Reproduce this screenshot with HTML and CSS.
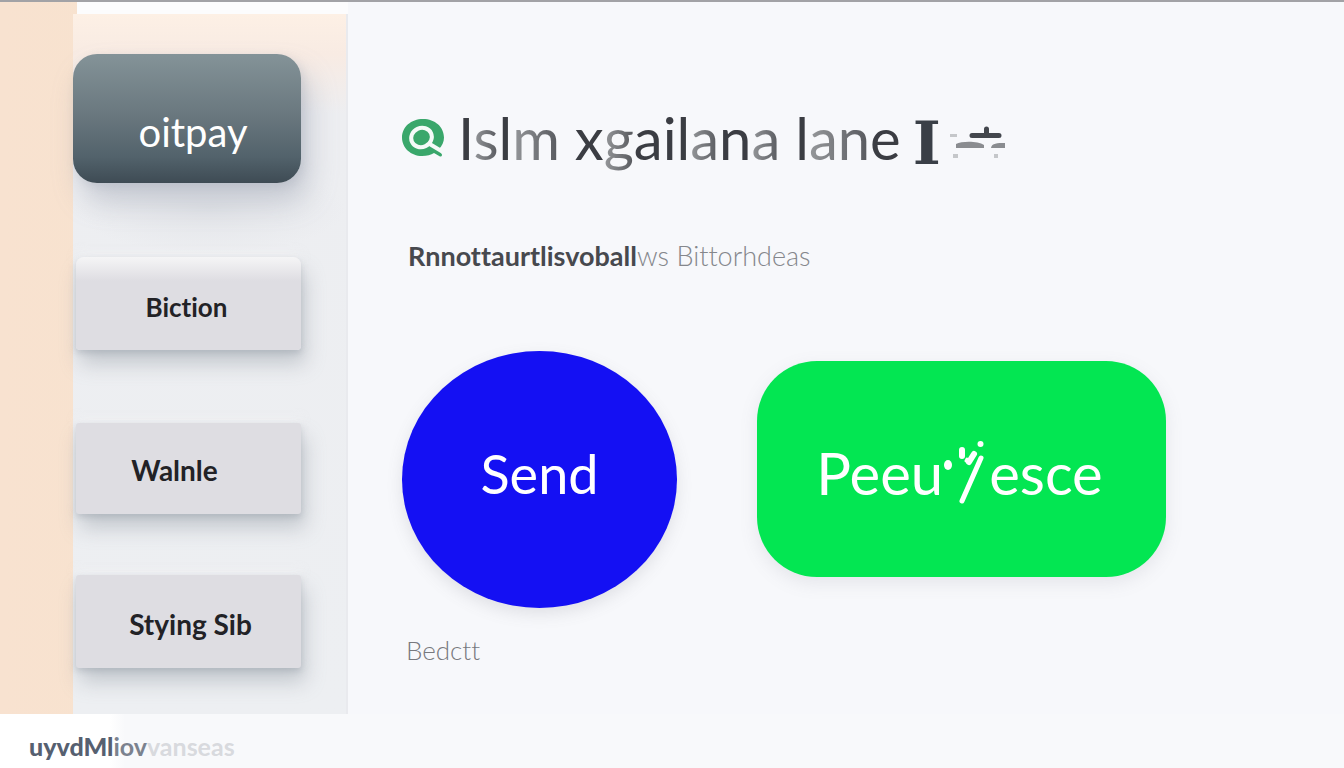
FILE: index.html
```html
<!DOCTYPE html>
<html lang="en">
<head>
<meta charset="utf-8">
<title>Oitpay</title>
<meta name="viewport" content="width=device-width, initial-scale=1">
<link rel="stylesheet" href="styles.css">
</head>
<body>
<div class="app">
  <aside class="sidebar">
    <nav class="panel" aria-label="Main">
      <button class="tile brand" type="button">oitpay</button>
      <button class="tile item item-soft" type="button">Biction</button>
      <button class="tile item item-left" type="button">Walnle</button>
      <button class="tile item item-last" type="button">Stying Sib</button>
    </nav>
  </aside>
  <main class="main">
    <h1 class="title">
      <svg class="logo" viewBox="0 0 42 38" aria-hidden="true">
        <path d="M21 0C9 0 0 8 0 18.500S9 37 20 37c5 0 9-1 12-3l6 3.500c2 .5 2.500-1.500 1.500-3L37 30c3-3 5-7 5-11.500C42 8 33 0 21 0Z" fill="#3aa76b"/>
        <ellipse cx="19.500" cy="18.500" rx="10.500" ry="9.500" transform="rotate(-25 19.500 18.500)" fill="none" stroke="#f5faf8" stroke-width="4"/>
        <path d="m26 24 15 9" stroke="#f5faf8" stroke-width="4" fill="none"/>
      </svg>
      <span class="words"><span class="ink">I</span><span class="fade">s</span><span class="ink">l</span><span class="fade">m</span> <span class="ink">x</span><span class="fade">g</span><span class="ink">ail</span><span class="fade">a</span><span class="ink">n</span><span class="fade">a</span> <span class="ink">l</span><span class="fade">an</span><span class="ink">e</span></span>
      <span class="serif">I</span>
      <svg class="mark" viewBox="0 0 58 34" aria-hidden="true">
        <path d="M23 10.500h27M37.500 4v6" stroke="#43474d" stroke-width="5" stroke-linecap="round"/>
        <path d="M7 23v-4c6-3 22-3 28 1v3ZM42 23c1-5 6-5 14-5v5Z" fill="#8a8c90"/>
        <path d="M1 9h7v3H1ZM4 29h5v4H4ZM45 29h4v4h-4Z" fill="#c5c7ca"/>
      </svg>
    </h1>
    <p class="subtitle"><strong>Rnnottaurtlisvoball</strong><span class="thin">ws Bittorhdeas</span></p>
    <div class="actions">
      <button class="action send" type="button">Send</button>
      <button class="action receive" type="button"><span>Peeu</span><svg class="slash" viewBox="0 0 46 66" aria-hidden="true">
          <g stroke="#fff" stroke-linecap="round" fill="none">
            <path d="M38 18 19 61" stroke-width="5"/>
            <path d="m31 14-5 8" stroke-width="6"/>
            <path d="M19 10v6" stroke-width="6"/>
            <path d="m24 19-1 2" stroke-width="3"/>
          </g>
          <circle cx="37.500" cy="4" r="3" fill="#fff"/>
          <ellipse cx="5" cy="25" rx="4" ry="5" fill="#fff"/>
        </svg><span>esce</span></button>
    </div>
    <p class="caption">Bedctt</p>
  </main>
  <footer class="footer"><span class="foot-strong">uyvdMl</span><span class="foot-mid">iov</span><span class="foot-faint">vanseas</span></footer>
</div>
</body>
</html>
```
FILE: styles.css
```css
* { box-sizing: border-box; }
body {
  margin: 0;
  font-family: Lato, "Open Sans", sans-serif;
  font-variant-ligatures: none;
  background: #f7f8fb;
  color: #25262a;
}
p, h1 { margin: 0; }
button { border: 0; font-family: inherit; font-variant-ligatures: none; cursor: pointer; }

.app {
  display: grid;
  grid-template-columns: 348px 1fr;
  grid-template-rows: 1fr 54px;
  min-height: 100vh;
  border-top: 2px solid #a2a2a6;
}

.sidebar {
  padding: 12px 0 0 73px;
  background:
    linear-gradient(#fcfcfd, #fcfcfd) 77px 0 / 100% 12px no-repeat,
    linear-gradient(90deg, #f8e2d0, #f7e3cc);
}
.panel {
  display: flex;
  flex-direction: column;
  height: 100%;
  padding: 40px 45px 45px 0;
  border-right: 2px solid #e9eaee;
  background:
    radial-gradient(ellipse at 50% 50%, #e3e5e9, #e3e5e900 70%) 0 150px / 100% 90px no-repeat,
    linear-gradient(#fdf0e5 0, #f8ebe3 40px, #edeef1 100px, #edeff2 100%);
}
.tile {
  font-size: 26px;
  line-height: 32px;
  font-weight: 700;
  color: #222226;
}
.brand {
  height: 129px;
  margin-bottom: 74px;
  padding: 26px 0 0 12px;
  border-radius: 24px;
  color: #fff;
  font-size: 40px;
  line-height: 48px;
  font-weight: 400;
  background: linear-gradient(#849398, #69777e 48%, #52626b 80%, #3e4b54);
  box-shadow: 8px 18px 28px #8c94a466, 3px 3px 10px #8c94a433;
}
.item {
  height: 93px;
  margin: 0 0 73px 3px;
  padding: 6px 4px 0 0;
  border-radius: 3px;
  background: #dedde2;
  box-shadow: 4px 14px 20px #8f98a270, 0 3px 6px #8f98a260, 0 -5px 8px #f5f6f780;
}
.item-soft {
  border-radius: 8px 8px 4px 4px;
  background: linear-gradient(#f5f5f6, #dedde2 24px);
}
.item-left { height: 91px; padding: 2px 28px 0 0; margin-bottom: 61px; font-size: 28px; }
.item-last { margin-bottom: 0; padding: 4px 0 0 4px; font-size: 28px; }

.main { padding: 102px 54px 0; }
.title {
  display: flex;
  align-items: center;
  height: 68px;
  font-size: 58px;
  line-height: 68px;
  font-weight: 400;
  color: #3b3d43;
  white-space: nowrap;
}
.logo { flex: none; width: 42px; height: 38px; margin-right: 14px; }
.ink { color: #3b3d43; }
.fade {
  color: transparent;
  background: linear-gradient(90deg, #96989b, #56585d);
  background-clip: text;
  -webkit-background-clip: text;
}
.serif {
  margin-left: 12px;
  padding-top: 10px;
  font-family: "DejaVu Serif", serif;
  font-size: 60px;
  font-weight: 700;
  color: #3a3f47;
}
.mark { flex: none; width: 58px; height: 34px; margin: 8px 0 0 8px; }
.subtitle {
  margin-top: 68px;
  padding-left: 6px;
  font-size: 27px;
  line-height: 32px;
  color: #47494e;
}
.thin { font-weight: 300; color: #85878c; }
.actions {
  display: flex;
  align-items: flex-start;
  gap: 80px;
  margin-top: 79px;
}
.action { padding: 0; color: #fff; font-size: 54px; line-height: 64px; }
.send {
  flex: 0 1 275px;
  height: 257px;
  padding-bottom: 12px;
  border-radius: 50%;
  background: #1410f3;
  box-shadow: 0 6px 16px #65657528;
}
.receive {
  display: flex;
  align-items: center;
  justify-content: center;
  flex: 0 1 409px;
  height: 216px;
  margin-top: 10px;
  padding: 8px 4px 0 0;
  font-size: 58px;
  border-radius: 60px;
  background: #03e652;
  box-shadow: 0 6px 18px #70708022;
}
.slash { flex: none; width: 46px; height: 66px; }
.caption {
  margin-top: 26px;
  padding-left: 4px;
  font-size: 26px;
  line-height: 32px;
  font-weight: 300;
  color: #77797e;
}

.footer {
  grid-column: 1 / -1;
  display: flex;
  align-items: center;
  padding: 10px 0 0 29px;
  font-size: 25px;
  line-height: 28px;
  font-weight: 700;
  background: linear-gradient(90deg, #fff 110px, #f8f9fb 125px);
}
.foot-strong { font-weight: 900; color: #566070; }
.foot-mid { color: #7b828e; }
.foot-faint { color: #d8dade; }
```
